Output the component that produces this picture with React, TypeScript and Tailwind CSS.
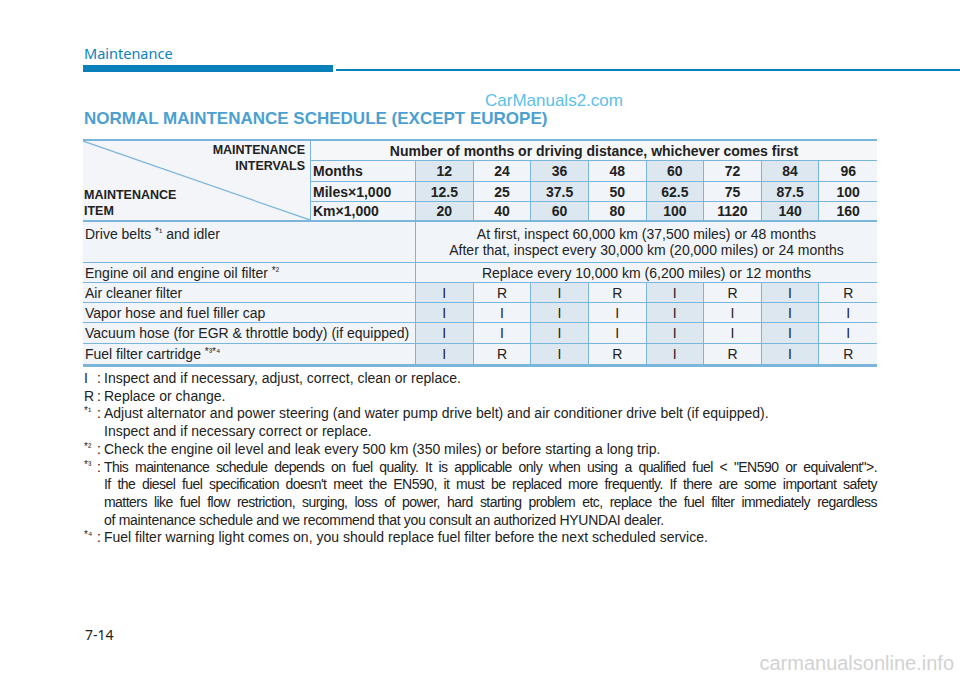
const MONTHS = ["12", "24", "36", "48", "60", "72", "84", "96"];
const MILES = ["12.5", "25", "37.5", "50", "62.5", "75", "87.5", "100"];
const KMS = ["20", "40", "60", "80", "100", "1120", "140", "160"];
const IR = ["I", "R", "I", "R", "I", "R", "I", "R"];
const II = ["I", "I", "I", "I", "I", "I", "I", "I"];

const border = "border-[#7ab5db]";

const Sup = ({ children }: { children: React.ReactNode }) => (
  <span className="relative -top-[4px] text-[10px] leading-none">{children}</span>
);

const ValueCells = ({ values, bold, thick }: { values: string[]; bold?: boolean; thick?: boolean }) => (
  <>
    {values.map((v, i) => (
      <div
        key={i}
        className={`flex items-center justify-center ${thick ? "border-b-2" : "border-b"} ${border} ${i < 7 ? "border-r" : ""} ${
          i % 2 === 0 ? "bg-[#dce7f0]" : "bg-[#f1f5f9]"
        } ${bold ? "font-bold" : ""}`}
      >
        {v}
      </div>
    ))}
  </>
);

const HeadRow = ({ label, values, thick }: { label: string; values: string[]; thick?: boolean }) => (
  <>
    <div className={`flex items-center border-r ${thick ? "border-b-2" : "border-b"} ${border} bg-[#f1f5f9] pl-[2px] font-bold`}>
      {label}
    </div>
    <ValueCells values={values} bold thick={thick} />
  </>
);

const ItemLabel = ({ children, top }: { children: React.ReactNode; top?: boolean }) => (
  <div
    className={`col-span-2 flex ${top ? "items-start pt-[4px]" : "items-center"} border-r border-b ${border} bg-[#f1f5f9] pl-[2px]`}
  >
    <span>{children}</span>
  </div>
);

const Note = ({ mark, children }: { mark: React.ReactNode; children: React.ReactNode }) => (
  <div className="flex">
    <span className="w-[13px] shrink-0">{mark}</span>
    <span className="w-[7px] shrink-0">:</span>
    <div className="min-w-0 flex-1">{children}</div>
  </div>
);

// lines of the long note are justified edge to edge, as in the printed manual
const Justified = ({ children }: { children: React.ReactNode }) => (
  <div className="whitespace-nowrap text-justify tracking-[-0.55px] [text-align-last:justify]">{children}</div>
);

export default function App() {
  return (
    <div
      className="relative flex h-[689px] w-[960px] flex-col overflow-hidden bg-white pt-[44px] text-[#222]"
      style={{ fontFamily: '"Liberation Sans", Arial, sans-serif' }}
    >
      <div className="pl-[84px] text-[14.5px] leading-[18px] text-[#0c82bd]" style={{ fontFamily: '"Noto Sans", sans-serif' }}>
        Maintenance
      </div>
      <div className="mt-[3px] flex items-end pl-[83px]">
        <div className="h-[7px] w-[250px] bg-[#0a80bb]" />
        <div className="mb-[1px] ml-[3px] h-[2px] flex-1 bg-[#0a80bb]" />
      </div>

      <div className="mt-[19px] pl-[485px] text-[17px] leading-[20px] text-[#5cc0ea]">CarManuals2.com</div>

      <div className="-mt-[2px] pl-[84px] text-[17px] font-bold leading-[20px] text-[#4c9fd1]">
        NORMAL MAINTENANCE SCHEDULE (EXCEPT EUROPE)
      </div>

      <div
        className={`ml-[83px] mt-[10px] grid w-[794px] grid-cols-[228px_105px_repeat(8,minmax(0,1fr))] grid-rows-[20px_21px_20px_20px_41px_20px_20px_20px_21px_21px] border-t-2 border-b-2 ${border} text-[14px] leading-[16px]`}
      >
        <div className={`relative row-span-4 flex flex-col justify-between border-r border-b-2 ${border} bg-[#f3f5f8] text-[12.5px] font-bold leading-[16px]`}>
          <svg className="absolute inset-0 h-full w-full" preserveAspectRatio="none" viewBox="0 0 100 100">
            <line x1="0" y1="0" x2="100" y2="100" stroke="#7ab5db" strokeWidth="1.2" vectorEffect="non-scaling-stroke" />
          </svg>
          <div className="relative pr-[5px] pt-[1px] text-right">
            MAINTENANCE
            <br />
            INTERVALS
          </div>
          <div className="relative pb-[1px] pl-[1px]">
            MAINTENANCE
            <br />
            ITEM
          </div>
        </div>
        <div className={`col-span-9 flex items-center justify-center border-b ${border} bg-[#f5f7f9] font-bold`}>
          Number of months or driving distance, whichever comes first
        </div>
        <HeadRow label="Months" values={MONTHS} />
        <HeadRow label="Miles×1,000" values={MILES} />
        <HeadRow label="Km×1,000" values={KMS} thick />

        <ItemLabel top>
          Drive belts <Sup>*¹</Sup> and idler
        </ItemLabel>
        <div className={`col-span-8 flex flex-col items-center justify-center border-b ${border} bg-[#f1f5f9] text-center`}>
          <div>At first, inspect 60,000 km (37,500 miles) or 48 months</div>
          <div>After that, inspect every 30,000 km (20,000 miles) or 24 months</div>
        </div>

        <ItemLabel>
          Engine oil and engine oil filter <Sup>*²</Sup>
        </ItemLabel>
        <div className={`col-span-8 flex items-center justify-center border-b ${border} bg-[#f1f5f9]`}>
          Replace every 10,000 km (6,200 miles) or 12 months
        </div>

        <ItemLabel>Air cleaner filter</ItemLabel>
        <ValueCells values={IR} />
        <ItemLabel>Vapor hose and fuel filler cap</ItemLabel>
        <ValueCells values={II} />
        <ItemLabel>Vacuum hose (for EGR &amp; throttle body) (if equipped)</ItemLabel>
        <ValueCells values={II} />
        <ItemLabel>
          Fuel filter cartridge <Sup>*³*⁴</Sup>
        </ItemLabel>
        <ValueCells values={IR} />
      </div>

      <div className="ml-[84px] mt-[3px] w-[793px] text-[14px] leading-[17.7px]">
        <Note mark="I">Inspect and if necessary, adjust, correct, clean or replace.</Note>
        <Note mark="R">Replace or change.</Note>
        <Note mark={<Sup>*¹</Sup>}>
          Adjust alternator and power steering (and water pump drive belt) and air conditioner drive belt (if equipped).
          <br />
          Inspect and if necessary correct or replace.
        </Note>
        <Note mark={<Sup>*²</Sup>}>Check the engine oil level and leak every 500 km (350 miles) or before starting a long trip.</Note>
        <Note mark={<Sup>*³</Sup>}>
          <Justified>
            This maintenance schedule depends on fuel quality. It is applicable only when using a qualified fuel &lt; "EN590 or equivalent"&gt;.
          </Justified>
          <Justified>
            If the diesel fuel specification doesn't meet the EN590, it must be replaced more frequently. If there are some important safety
          </Justified>
          <Justified>
            matters like fuel flow restriction, surging, loss of power, hard starting problem etc, replace the fuel filter immediately regardless
          </Justified>
          <div className="tracking-[-0.3px]">of maintenance schedule and we recommend that you consult an authorized HYUNDAI dealer.</div>
        </Note>
        <Note mark={<Sup>*⁴</Sup>}>
          Fuel filter warning light comes on, you should replace fuel filter before the next scheduled service.
        </Note>
      </div>

      <div className="ml-[85px] mt-auto pb-[45px] text-[14px] leading-[18px] text-[#222]" style={{ fontFamily: '"Noto Sans", sans-serif' }}>
        7-14
      </div>

      <div className="absolute right-[6px] top-[648px] text-[20px] text-[#d2d2d2]">carmanualsonline.info</div>
    </div>
  );
}
